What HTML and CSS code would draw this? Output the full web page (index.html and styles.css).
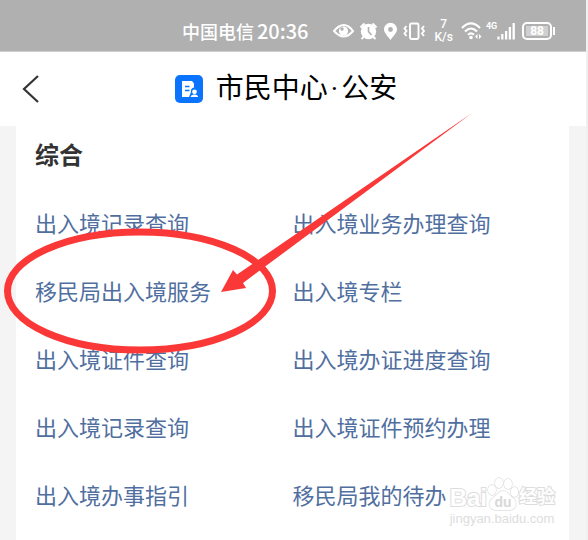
FILE: index.html
```
<!DOCTYPE html>
<html lang="zh-CN">
<head>
  <meta charset="UTF-8">
  <meta name="viewport" content="width=device-width, initial-scale=1.0">
  <title>市民中心·公安</title>
  <link rel="stylesheet" href="styles.css">
</head>
<body>
  <div class="status-bar">
    <span class="carrier">中国电信</span>
    <span class="clock">20:36</span>
    <svg class="status-icons" width="93" height="24" viewBox="0 0 93 24" aria-hidden="true">
      <!-- eye -->
      <path d="M1 12Q11 0 20 12Q11 23 1 12Z" fill="none" stroke="#fff" stroke-width="2"/>
      <circle cx="10.500" cy="12" r="4.600" fill="#fff"/>
      <circle cx="9" cy="10" r="1.700" fill="#b0b0b0"/>
      <!-- alarm -->
      <circle cx="35.500" cy="12.500" r="7.700" fill="#fff"/>
      <path d="M27.500 8.500L31.500 4.500M39.500 4.500L43.500 8.500M30.500 18L28.500 20M40.500 18L42.500 20" stroke="#fff" stroke-width="2"/>
      <path d="M35.500 8V12.500L38.500 16" fill="none" stroke="#b0b0b0" stroke-width="1.600"/>
      <!-- location -->
      <path d="M57.500 21C54 16.500 51 13.500 51 10.300A6.500 6.500 0 0 1 64 10.300C64 13.500 61 16.500 57.500 21Z" fill="#fff"/>
      <circle cx="57.500" cy="10.500" r="2.400" fill="#b0b0b0"/>
      <!-- vibrate -->
      <rect x="77" y="4.500" width="8.500" height="15.500" rx="1.500" fill="none" stroke="#fff" stroke-width="1.900"/>
      <path d="M73.500 7L71.500 9.500L73.500 12L71.500 14.500L73.500 17M91 7L89 9.500L91 12L89 14.500L91 17" fill="none" stroke="#fff" stroke-width="1.900"/>
    </svg>
    <span class="speed"><span>7</span><span>K/s</span></span>
    <svg class="wifi" width="22" height="20" viewBox="0 0 22 20" aria-hidden="true">
      <path d="M1 7Q10 -2 19 7M4 10.500Q10 4.500 16 10.500M7 13.800Q10 11 13 13.800" fill="none" stroke="#fff" stroke-width="2.200"/>
      <circle cx="10" cy="16.500" r="1.800" fill="#fff"/>
      <path d="M16.500 13L14 15.500L16.500 18ZM18 13L20.500 15.500L18 18Z" fill="#fff"/>
    </svg>
    <span class="network">4G</span>
    <svg class="signal" width="18" height="18" viewBox="0 0 18 18" aria-hidden="true">
      <path d="M1.500 14.500V17.500M5.300 12V17.500M9.100 9V17.500M12.900 5V17.500M16.700 1V17.500" stroke="#fff" stroke-width="2.300"/>
    </svg>
    <span class="battery"><span>88</span></span>
  </div>

  <header class="title-bar">
    <button class="back" aria-label="返回">
      <svg width="18" height="30" viewBox="0 0 18 30">
        <path d="M16 2L2 15L16 28" fill="none" stroke="#333" stroke-width="2.200"/>
      </svg>
    </button>
    <h1 class="title">
      <svg width="28" height="28" viewBox="0 0 28 28" aria-hidden="true">
        <rect width="28" height="28" rx="5" fill="#0a74ff"/>
        <path d="M7 6H17L19 8.500V12.500A4 4 0 0 0 16 17L14 22H7Z" fill="#fff"/>
        <path d="M10 11.500H14.500M10 15.500H14.500" stroke="#0a74ff" stroke-width="1.500"/>
        <circle cx="19.500" cy="16.800" r="2.400" fill="#fff"/>
        <path d="M15.500 22Q16 19.500 19.500 19.500T23 22Z" fill="#fff"/>
      </svg>
      <span>市民中心<span class="dot">·</span>公安</span>
    </h1>
  </header>

  <main class="panel">
    <h2 class="section-title">综合</h2>
    <ul class="services">
      <li><a href="#">出入境记录查询</a></li>
      <li><a href="#">出入境业务办理查询</a></li>
      <li><a href="#">移民局出入境服务</a></li>
      <li><a href="#">出入境专栏</a></li>
      <li><a href="#">出入境证件查询</a></li>
      <li><a href="#">出入境办证进度查询</a></li>
      <li><a href="#">出入境记录查询</a></li>
      <li><a href="#">出入境证件预约办理</a></li>
      <li><a href="#">出入境办事指引</a></li>
      <li><a href="#">移民局我的待办</a></li>
    </ul>
  </main>

  <!-- red circle and arrow over the list -->
  <svg class="marker" width="480" height="360" viewBox="0 0 480 360" aria-hidden="true">
    <ellipse cx="140" cy="291" rx="132.500" ry="59" fill="none" stroke="#fb3838" stroke-width="7"/>
    <path d="M472 113L237 274.500L233 270L221 292L246 288L243 283Z" fill="#fb3838"/>
  </svg>

  <div class="watermark">
    <div class="brand">
      <span class="brand-bai">Bai</span>
      <svg width="32" height="35" viewBox="0 0 32 35" aria-hidden="true">
        <g fill="#fff" stroke="#ddd" stroke-width="1.300">
          <ellipse cx="5" cy="13" rx="4" ry="5"/>
          <ellipse cx="12" cy="6" rx="4" ry="5"/>
          <ellipse cx="21" cy="7" rx="4" ry="5"/>
          <ellipse cx="27.500" cy="15" rx="3.800" ry="5"/>
          <path d="M16 14C20 14 22 18 26 21C31 25 29 33 23 33C19 33 13 33 9 33C2 33 0 25 6 21C10 18 12 14 16 14Z"/>
        </g>
        <text class="brand-du" x="16" y="30" text-anchor="middle">du</text>
      </svg>
      <span class="brand-cn">经验</span>
    </div>
    <div class="site">jingyan.baidu.com</div>
  </div>
</body>
</html>
```
FILE: styles.css
```
* {
  box-sizing: border-box;
}
body {
  margin: 0;
  min-height: 100vh;
  display: flex;
  flex-direction: column;
  position: relative;
  overflow: hidden;
  border-right: 2px solid #f0f0f0;
  background: #fff;
  font-family: Roboto, "Noto Sans CJK SC", sans-serif;
}
.status-bar {
  display: flex;
  align-items: center;
  justify-content: flex-end;
  height: 52px;
  padding: 10px 34px 0 0;
  background: #b0b0b0;
  border-bottom: 1px solid #d0d0d0;
  color: #fff;
}
.carrier {
  font-size: 18px;
  font-weight: 500;
}
.clock {
  margin-left: 3px;
  font-family: "Noto Sans CJK SC", sans-serif;
  font-size: 20px;
  font-weight: 500;
}
.status-icons {
  margin-left: 25px;
}
.speed {
  display: flex;
  flex-direction: column;
  align-items: center;
  margin: 0 8px;
  font-size: 12px;
  font-weight: 500;
  line-height: 13px;
}
.network {
  align-self: flex-start;
  margin: 10px 0 0 3px;
  font-size: 9px;
  font-weight: bold;
  line-height: 12px;
}
.battery {
  position: relative;
  margin-left: 7px;
  padding: 2px;
  border: 2px solid #fff;
  border-radius: 5px;
  font-size: 12px;
  font-weight: bold;
  line-height: 10px;
}
.battery span {
  display: block;
  padding: 0 4px;
  background: #d0d0d0;
}
.battery::after {
  content: "";
  position: absolute;
  right: -5px;
  top: 3px;
  width: 2px;
  height: 8px;
  background: #fff;
}
.title-bar {
  display: flex;
  align-items: center;
  height: 74px;
  padding: 0 22px;
}
.back {
  display: flex;
  width: 18px;
  padding: 0;
  border: none;
  background: none;
  cursor: pointer;
}
.title {
  flex: 1;
  display: flex;
  align-items: center;
  justify-content: center;
  gap: 13px;
  margin: 0 32px 0 0;
  font-size: 28px;
  font-weight: 400;
  line-height: 40px;
  color: #000;
}
.dot {
  padding: 0 3px;
}
.panel {
  flex: 1;
  padding: 11px 19px 0;
  border-left: 16px solid #f4f4f4;
  border-right: 17px solid #f4f4f4;
}
.section-title {
  margin: 0 0 16px;
  font-size: 24px;
  line-height: 38px;
  color: #333;
}
.services {
  display: grid;
  grid-template-columns: 1fr 1fr;
  margin: 0;
  padding: 0;
  list-style: none;
}
.services a {
  display: block;
  font-size: 22px;
  line-height: 68px;
  white-space: nowrap;
  color: #506f9f;
  text-decoration: none;
}
.marker {
  position: absolute;
  left: 0;
  top: 0;
  pointer-events: none;
}
.watermark {
  position: absolute;
  right: 31px;
  bottom: 14px;
  color: #fff;
  -webkit-text-stroke: 2px #ddd;
  paint-order: stroke fill;
}
.brand {
  display: flex;
  align-items: flex-end;
  height: 35px;
}
.brand-bai {
  font-family: "Liberation Sans", sans-serif;
  font-size: 24px;
  font-weight: bold;
  line-height: 28px;
}
.brand-du {
  fill: #d8d8d8;
  stroke: none;
  -webkit-text-stroke: 0;
  font-family: "Liberation Sans", sans-serif;
  font-size: 14px;
  font-weight: bold;
}
.brand-cn {
  font-size: 18px;
  font-weight: bold;
  line-height: 30px;
}
.site {
  font-family: "Liberation Sans", sans-serif;
  font-size: 13px;
  line-height: 14px;
  color: #ddd;
  -webkit-text-stroke: 0;
}
```
